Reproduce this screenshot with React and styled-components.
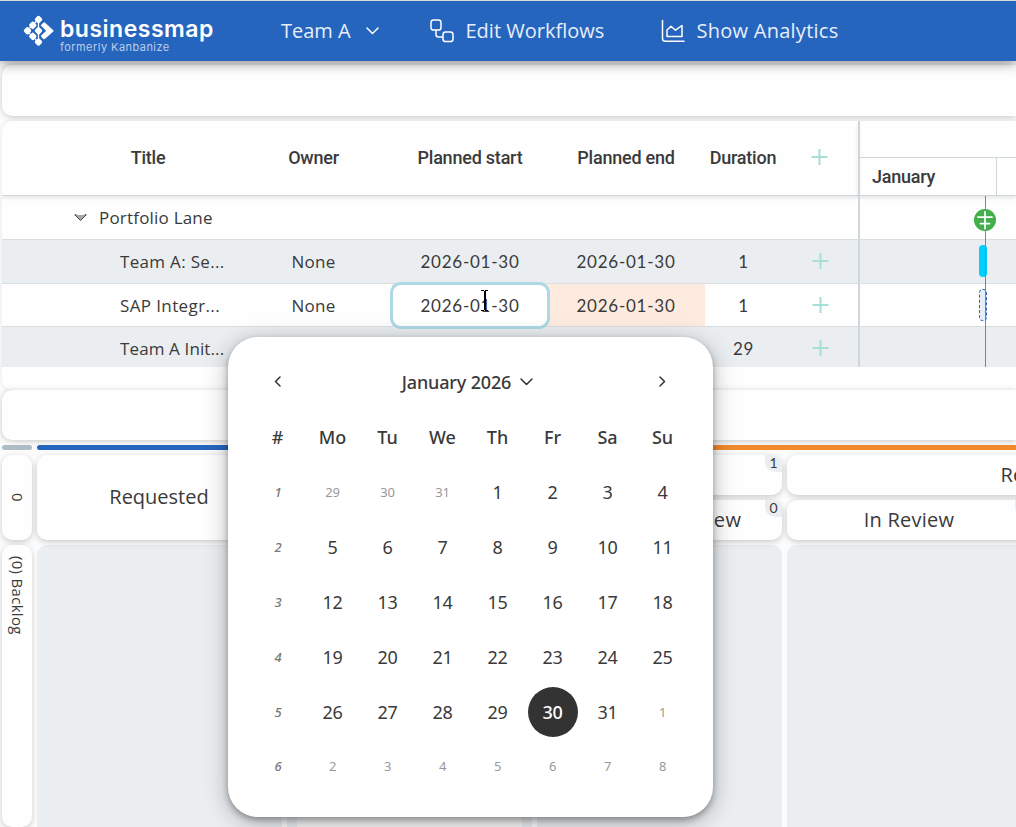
import React from "react";
import styled, { createGlobalStyle } from "styled-components"

const GlobalStyle = createGlobalStyle `
* {
    box-sizing: border-box;
}
body {
    margin: 0;
    overflow: hidden;
    background-color: #FCFCFC;
    color: #3A3A3A;
    font-family: "Open Sans", "Noto Sans", sans-serif;
}
`
const Page = styled.div `
    position: relative;
    width: 1016px;
    height: 827px;
    overflow: hidden;
    display: flex;
    flex-direction: column;
`
const Header = styled.header `
    position: relative;
    z-index: 2;
    height: 61px;
    flex: none;
    display: flex;
    align-items: center;
    padding-left: 23px;
    border-top: 1px solid #D5DCDC;
    background-color: #2665BE;
    color: #E6EEFA;
    box-shadow: 0 2px 12px rgba(0, 0, 0, 0.45);
`
const Logo = styled.div `
    display: flex;
    width: 258px;
    gap: 5px;
`
const LogoMark = styled.svg `
    margin-top: 2px;
`
const LogoText = styled.div `
    display: flex;
    flex-direction: column;
    height: 36px;
    color: #FFF;
`
const Brand = styled.span `
    height: 28px;
    flex: none;
    font: 600 23px/32px Inter, sans-serif;
    letter-spacing: 0.5px;
    white-space: nowrap;
`
const Formerly = styled.span `
    font: 400 11px/12px Inter, sans-serif;
    letter-spacing: 0.45px;
    color: #BACDEA;
    white-space: nowrap;
`
const NavItem = styled.div `
    display: flex;
    align-items: center;
    gap: ${props => props.$gap};
    width: ${props => props.$width};
    font-size: 20px;
    line-height: 28px;
    letter-spacing: ${props => props.$spacing};
    white-space: nowrap;
`
const Main = styled.main `
    flex: 1;
    display: flex;
    flex-direction: column;
    padding: 4px 0 0 2px;
`
const Bar = styled.div `
    height: ${props => props.$height};
    flex: none;
    margin-bottom: 5px;
    border-radius: 10px 0 0 10px;
    background-color: #FEFEFE;
    box-shadow: 0 1px 6px rgba(0, 0, 0, 0.22);
`
const Gantt = styled.section `
    display: flex;
    height: 269px;
    flex: none;
    border-radius: 10px 0 0 10px;
    background-color: #FEFEFE;
    box-shadow: 0 0 5px rgba(0, 0, 0, 0.1);
    overflow: hidden;
`
const Table = styled.div `
    width: 856px;
    flex: none;
`
const tableColumns = "236px 151px 161px 155px 75px 78px"
const HeadRow = styled.div `
    display: grid;
    grid-template-columns: ${tableColumns};
    align-items: center;
    height: 75px;
    border-bottom: 1px solid #CDD6DB;
    box-shadow: 0 2px 4px rgba(0, 0, 0, 0.1);
    font: 500 18px/24px Roboto, sans-serif;
    letter-spacing: -0.22px;
    white-space: nowrap;
`
const HeadCell = styled.div `
    display: flex;
    justify-content: center;
    padding: ${props => props.$padding || "0"};
`
const Row = styled.div `
    display: grid;
    grid-template-columns: ${tableColumns};
    align-items: stretch;
    height: ${props => props.$height};
    padding-top: ${props => props.$last ? "2px" : "0"};
    border-bottom: ${props => props.$last ? "none" : "1px solid #D9DEE0"};
    background-color: ${props => props.$shaded ? "#EAEEF1" : "transparent"};
    font-size: 17px;
`
const LaneTitle = styled.div `
    grid-column: 1 / -1;
    display: flex;
    align-items: center;
    gap: 12px;
    padding-left: 72px;
    letter-spacing: 0.2px;
`
const TitleCell = styled.div `
    display: flex;
    align-items: center;
    padding-left: 118px;
    letter-spacing: ${props => props.$spacing};
    white-space: nowrap;
`
const Cell = styled.div `
    display: flex;
    align-items: center;
    justify-content: center;
    padding: ${props => props.$padding || "0"};
    background-color: ${props => props.$late ? "#FDEBDF" : "transparent"};
    letter-spacing: 0.25px;
`
const EditCell = styled(Cell) `
    align-items: stretch;
    background: linear-gradient(to right, transparent 3px, #FDEBDF 3px);
`
const Digits = styled.span `
    font-family: Lato, sans-serif;
    letter-spacing: 0.75px;
`
const DateInput = styled.div `
    flex: 1;
    position: relative;
    margin: -2px 0 -3px 1px;
    z-index: 1;
    display: flex;
    align-items: center;
    justify-content: center;
    border: 3px solid #ADD8E6;
    border-radius: 11px;
    background-color: #FFF;
`
const TextCursor = styled.svg `
    position: absolute;
    left: 87px;
    top: 5px;
`
const Timeline = styled.div `
    position: relative;
    flex: 1;
`
const Months = styled.div `
    height: 75px;
    display: grid;
    grid-template: 37px 37px / 137px 1fr;
    border-left: 2px solid #CFD7DC;
    border-bottom: 1px solid #CDD6DB;
    box-shadow: 0 2px 4px rgba(0, 0, 0, 0.1);
`
const YearCell = styled.div `
    grid-column: 1 / -1;
    border-bottom: 1px solid #CDD6DB;
`
const MonthCell = styled.div `
    padding: 7px 0 0 12px;
    border-right: 1px solid #CDD6DB;
    font: 500 18px/24px Roboto, sans-serif;
    letter-spacing: -0.25px;
`
const TimelineRow = styled.div `
    height: ${props => props.$height};
    border-left: 2px solid #CFD7DC;
    border-bottom: ${props => props.$last ? "none" : "1px solid #D9DEE0"};
    background-color: ${props => props.$shaded ? "#EAEEF1" : "transparent"};
`
const TodayLine = styled.div `
    position: absolute;
    left: 127px;
    top: 75px;
    width: 1px;
    height: 171px;
    background-color: #43AE4B;
`
const TodayBadge = styled.svg `
    position: absolute;
    left: 116px;
    top: 88px;
`
const Task = styled.div `
    position: absolute;
    left: 121px;
    top: ${props => props.$top};
    width: 8px;
    height: 32px;
    border-radius: 4px;
    border: ${props => props.$planned ? "1px dashed #2665BE" : "none"};
    background-color: ${props => props.$planned ? "#E6EDF8" : "#00CFFF"};
`
const Board = styled.section `
    flex: 1;
    display: grid;
    grid-template-columns: 30px repeat(5, 245px);
    grid-template-rows: 5px 40px 40px 1fr;
    gap: 5px;
    width: 1280px;
`
const Stripe = styled.div `
    grid-column: ${props => props.$column};
    border-radius: 3px;
    background-color: ${props => props.$color};
`
const BoardHead = styled.div `
    position: relative;
    grid-column: ${props => props.$column};
    grid-row: ${props => props.$row};
    display: flex;
    align-items: center;
    justify-content: center;
    padding: 0 1px 2px 0;
    border-radius: 10px;
    background-color: #FEFEFE;
    box-shadow: 0 2px 6px rgba(0, 0, 0, 0.2);
    font-size: 20px;
    letter-spacing: ${props => props.$spacing || "0"};
    white-space: nowrap;
`
const Count = styled.span `
    position: absolute;
    top: 0;
    right: 0;
    width: 17px;
    height: 17px;
    border-radius: 0 10px 0 10px;
    background-color: #EAEEF1;
    font: 400 14px/16px Lato, sans-serif;
    letter-spacing: 0;
    text-align: center;
`
const Lane = styled.div `
    grid-row: 4;
    border-radius: 10px 10px 0 0;
    background-color: #EAEEF1;
`
const Card = styled.div `
    margin: 200px 10px 0;
    height: 82px;
    background-color: #F8F8F8;
`
const Vertical = styled.div `
    display: flex;
    align-items: center;
    justify-content: ${props => props.$center ? "center" : "flex-start"};
    grid-column: 1;
    grid-row: ${props => props.$row};
    padding: ${props => props.$center ? "0 0 0 2px" : "11px 0 0 2px"};
    border-radius: 10px;
    background-color: #FEFEFE;
    box-shadow: 0 2px 6px rgba(0, 0, 0, 0.2);
    writing-mode: vertical-rl;
    font-size: 15px;
    letter-spacing: 0.3px;
`
const Calendar = styled.div `
    position: absolute;
    z-index: 3;
    left: 228px;
    top: 337px;
    width: 485px;
    height: 480px;
    padding: 17px 23px 0 22px;
    border-radius: 30px;
    background-color: #FFF;
    box-shadow: 0 5px 24px rgba(0, 0, 0, 0.28), 0 3px 6px rgba(0, 0, 0, 0.3);
    font-family: "Noto Sans", sans-serif;
`
const CalendarHead = styled.div `
    display: grid;
    grid-template-columns: 55px 1fr 55px;
    place-items: center;
    height: 55px;
`
const CalendarTitle = styled.div `
    display: flex;
    align-items: center;
    gap: 9px;
    padding-right: 5px;
    font-size: 18px;
    font-weight: 500;
    letter-spacing: -0.15px;
`
const Days = styled.div `
    display: grid;
    grid-template-columns: repeat(8, 55px);
    grid-template-rows: repeat(6, 55px) 54px;
    place-items: center;
`
const WeekDay = styled.div `
    font-size: 18px;
    font-weight: 500;
`
const WeekNumber = styled.div `
    padding-left: 1px;
    font-size: 13px;
    font-weight: 500;
    font-style: italic;
    color: #777;
`
const Day = styled.div `
    display: flex;
    align-items: center;
    justify-content: center;
    width: 50px;
    height: 50px;
    border-radius: 50%;
    font-size: ${props => props.$outside ? "13px" : "18px"};
    font-weight: ${props => props.$selected ? 500 : 400};
    letter-spacing: -0.2px;
    color: ${props => props.$selected ? "#FFF" : props.$outside ? "#999" : "#3A3A3A"};
    background-color: ${props => props.$selected ? "#333" : "transparent"};
`

const Plus = () => (
    <svg width="17" height="16" viewBox="0 0 17 16" stroke="#A6DFD8" strokeWidth="2">
        <path d="M8.500 0v16M0.500 8h16" />
    </svg>
)

const Chevron = ({ d, width, height, stroke = "#333" }) => (
    <svg width={width} height={height} viewBox={`0 0 ${width} ${height}`} fill="none" stroke={stroke} strokeWidth="1.5" strokeLinecap="round" strokeLinejoin="round">
        <path d={d} />
    </svg>
)

const logoNodes = [[15.5, 4.5], [9.8, 10.2], [4.5, 15.8], [15.5, 15.8], [9.8, 21.4], [15.5, 27]]

const rows = [
    { title: "Team A: Se...", start: "2026-01-30", duration: "1", shaded: true, height: "44px", spacing: "0.32px" },
    { title: "SAP Integr...", start: "2026-01-30", duration: "1", height: "43px", editing: true, spacing: "0.38px" },
    { title: "Team A Init...", start: "", duration: "29", shaded: true, height: "40px", last: true, spacing: "0.12px" },
]

const weekDays = ["#", "Mo", "Tu", "We", "Th", "Fr", "Sa", "Su"]

// 29 December 2025 is the monday of the first week shown
const weeks = [0, 1, 2, 3, 4, 5].map(week =>
    [0, 1, 2, 3, 4, 5, 6].map(day => new Date(2025, 11, 29 + week * 7 + day))
)

class App extends React.Component {
    state = {
        selected: 30,
    }

    selectDay = (day) => {
        this.setState({ selected: day })
    }

    render() {
        const tableRows = rows.map(row => (
            <Row key={row.title} $height={row.height} $shaded={row.shaded} $last={row.last}>
                <TitleCell $spacing={row.spacing}>{row.title}</TitleCell>
                <Cell>{row.start && "None"}</Cell>
                {row.editing ? (
                    <EditCell>
                        <DateInput>
                            <Digits>{row.start}</Digits>
                            <TextCursor width="10" height="21" viewBox="0 0 10 21" fill="none" stroke="#000">
                                <path d="M1 0.5h3M5 0.5h3M1 20.5h3M5 20.5h3" />
                                <path d="M5 1v19" strokeWidth="2" />
                            </TextCursor>
                        </DateInput>
                    </EditCell>
                ) : <Cell $padding="0 0 0 1px"><Digits>{row.start}</Digits></Cell>}
                <Cell $late={row.editing} $padding="0 3px 0 0"><Digits>{row.start}</Digits></Cell>
                <Cell $padding="0 0 0 2px"><Digits>{row.duration}</Digits></Cell>
                <Cell $padding="0 0 1px 2px"><Plus /></Cell>
            </Row>
        ))

        return (
            <Page>
                <GlobalStyle />
                <Header>
                    <Logo>
                        <LogoMark width="32" height="32" viewBox="0 0 32 32" fill="#FFF">
                            {logoNodes.map(([x, y]) => (
                                <rect key={`${x}-${y}`} x={x - 3.1} y={y - 3.1} width="6.2" height="6.2" rx="1.7" transform={`rotate(45 ${x} ${y})`} />
                            ))}
                            <path d="M15.5 4v23M4 15.800L15.5 4M4 15.800L15.5 27.500" stroke="#FFF" strokeWidth="1.2" />
                            <path d="M20.3 7.7Q21.2 6.9 22.1 7.8L30.3 15.2Q31 15.8 30.3 16.4L22.1 23.8Q21.2 24.7 20.3 23.9L18.2 21.8Q17.6 21.1 18.2 20.5L22.6 16.4Q23.2 15.8 22.6 15.2L18.2 11.1Q17.6 10.4 18.2 9.8Z" />
                        </LogoMark>
                        <LogoText>
                            <Brand>businessmap</Brand>
                            <Formerly>formerly Kanbanize</Formerly>
                        </LogoText>
                    </Logo>
                    <NavItem $gap="15px" $width="148.5px" $spacing="0">
                        Team A
                        <Chevron width={13} height={8} d="M1 1l5.5 5.5L12 1" stroke="#FFF" />
                    </NavItem>
                    <NavItem $gap="12px" $width="231px" $spacing="0px">
                        <svg width="24" height="24" viewBox="0 0 24 24" fill="none" stroke="#FFF" strokeWidth="1.5">
                            <rect x="1" y="1" width="10" height="10" rx="2.6" />
                            <rect x="13" y="13" width="10" height="9.5" rx="2.6" />
                            <path d="M6 11v4.5Q6 18 8.500 18H13" />
                        </svg>
                        Edit Workflows
                    </NavItem>
                    <NavItem $gap="12px" $width="auto" $spacing="0.26px">
                        <svg width="24" height="24" viewBox="0 0 24 24" fill="none" stroke="#FFF" strokeWidth="1.5" strokeLinejoin="round" strokeLinecap="round">
                            <path d="M1.500 1.500v18Q1.500 22.200 4.200 22.200H23" />
                            <path d="M6 17.500V11l4-3.800 4.500 4L21 6.500v11z" />
                        </svg>
                        Show Analytics
                    </NavItem>
                </Header>
                <Main>
                    <Bar $height="51px" />
                    <Gantt>
                        <Table>
                            <HeadRow>
                                <HeadCell $padding="0 0 0 56px">Title</HeadCell>
                                <HeadCell>Owner</HeadCell>
                                <HeadCell $padding="0 0 0 1px">Planned start</HeadCell>
                                <HeadCell $padding="0 3px 0 0">Planned end</HeadCell>
                                <HeadCell $padding="0 0 0 1px">Duration</HeadCell>
                                <HeadCell $padding="0 0 2px 1px"><Plus /></HeadCell>
                            </HeadRow>
                            <Row $height="44px">
                                <LaneTitle>
                                    <svg width="13" height="8" viewBox="0 0 13 8">
                                        <path d="M1 1h11L6.500 6.500z" fill="#A8A8A8" />
                                        <path d="M0.500 0.800h2M10.500 0.800h2M1 1l5.500 5.500L12 1" fill="none" stroke="#444" />
                                    </svg>
                                    Portfolio Lane
                                </LaneTitle>
                            </Row>
                            {tableRows}
                        </Table>
                        <Timeline>
                            <Months>
                                <YearCell />
                                <MonthCell>January</MonthCell>
                            </Months>
                            <TimelineRow $height="44px" />
                            <TimelineRow $height="44px" $shaded />
                            <TimelineRow $height="43px" />
                            <TimelineRow $height="40px" $shaded $last />
                            <Task $top="124px" />
                            <Task $top="168px" $planned />
                            <TodayLine />
                            <TodayBadge width="22" height="22" viewBox="0 0 22 22" stroke="#FFF" strokeWidth="1.8" strokeLinecap="round">
                                <circle cx="11" cy="11" r="11" fill="#43AE4B" stroke="none" />
                                <path d="M11 3v16.500M4 8.200h14M6.500 14.600h9" />
                            </TodayBadge>
                        </Timeline>
                    </Gantt>
                    <Bar $height="50px" />
                    <Board>
                        <Stripe $column="1" $color="#AEBDC5" />
                        <Stripe $column="2" $color="#2665BE" />
                        <Stripe $column="3 / 7" $color="#F08A2C" />
                        <Vertical $row="2 / 4" $center>0</Vertical>
                        <BoardHead $column="2" $row="2 / 4">Requested</BoardHead>
                        <BoardHead $column="3 / 5" $row="2"><Count>1</Count></BoardHead>
                        <BoardHead $column="3" $row="3" />
                        <BoardHead $column="4" $row="3" $spacing="0.3px">Ready for Review<Count>0</Count></BoardHead>
                        <BoardHead $column="5 / 7" $row="2" $spacing="0.3px">Review</BoardHead>
                        <BoardHead $column="5" $row="3" $spacing="0.25px">In Review<Count /></BoardHead>
                        <Vertical $row="4">(0) Backlog</Vertical>
                        <Lane />
                        <Lane><Card /></Lane>
                        <Lane />
                        <Lane />
                        <Lane />
                    </Board>
                </Main>
                <Calendar>
                    <CalendarHead>
                        <Chevron width={7} height={11} d="M6 1L1.500 5.500 6 10" />
                        <CalendarTitle>
                            January 2026
                            <Chevron width={13} height={8} d="M1 1l5.500 5.500L12 1" />
                        </CalendarTitle>
                        <Chevron width={7} height={11} d="M1 1l4.500 4.500L1 10" />
                    </CalendarHead>
                    <Days>
                        {weekDays.map(day => <WeekDay key={day}>{day}</WeekDay>)}
                        {weeks.map((week, idx) => (
                            <React.Fragment key={idx}>
                                <WeekNumber>{idx + 1}</WeekNumber>
                                {week.map(date => {
                                    const outside = date.getMonth() !== 0
                                    return (
                                        <Day
                                            key={date.getTime()}
                                            $outside={outside}
                                            $selected={!outside && date.getDate() === this.state.selected}
                                            onClick={() => this.selectDay(date.getDate())}
                                        >
                                            {date.getDate()}
                                        </Day>
                                    )
                                })}
                            </React.Fragment>
                        ))}
                    </Days>
                </Calendar>
            </Page>
        )
    }
}

export default App;
